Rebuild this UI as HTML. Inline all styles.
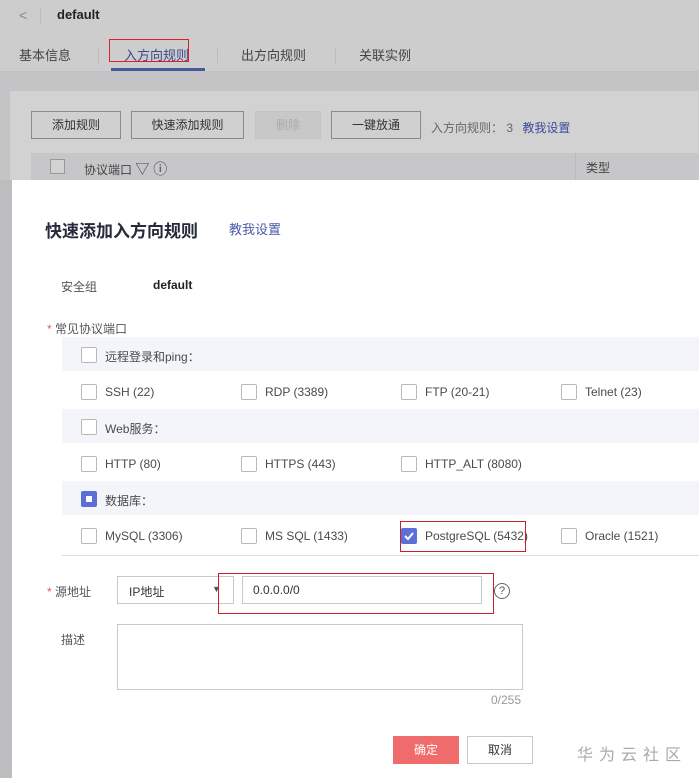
<!DOCTYPE html>
<html><head><meta charset="utf-8"><style>
*{margin:0;padding:0;box-sizing:border-box}
body{width:699px;height:778px;position:relative;overflow:hidden;background:#bfbfc2;font-family:"Liberation Sans","Noto Sans CJK SC",sans-serif;font-size:12px;color:#333}
.a{position:absolute}
.cb{position:absolute;width:14px;height:14px;border:1px solid #b8b8b8;background:#fff;border-radius:2px}
.lbl{position:absolute;font-size:12px;color:#4a4a4a}
.btn{position:absolute;border:1px solid #8a8a8a;background:#d0d0d0;font-size:12px;color:#333;text-align:center;line-height:26px;height:28px}
.row{position:absolute;left:62px;width:637px;height:34px;background:#f3f5fa}
</style></head><body>
<div class="a" style="left:0;top:0;width:699px;height:72px;background:#cdcdcd"></div>
<div class="a" style="left:19px;top:7px;color:#888;font-size:14px">&lt;</div>
<div class="a" style="left:40px;top:7px;width:1px;height:16px;background:#bbb"></div>
<div class="a" style="left:57px;top:7px;font-weight:bold;font-size:13px;color:#222">default</div>
<div class="a" style="left:19px;top:45px;font-size:13px;color:#444">基本信息</div>
<div class="a" style="left:98px;top:47px;width:1px;height:16px;background:#bbb"></div>
<div class="a" style="left:124px;top:45px;font-size:13px;color:#3d4a8c">入方向规则</div>
<div class="a" style="left:109px;top:39px;width:80px;height:23px;border:1px solid #e02020"></div>
<div class="a" style="left:111px;top:68px;width:94px;height:3px;background:#4a5899"></div>
<div class="a" style="left:217px;top:47px;width:1px;height:16px;background:#bbb"></div>
<div class="a" style="left:241px;top:45px;font-size:13px;color:#444">出方向规则</div>
<div class="a" style="left:335px;top:47px;width:1px;height:16px;background:#bbb"></div>
<div class="a" style="left:359px;top:45px;font-size:13px;color:#444">关联实例</div>
<div class="a" style="left:0;top:71px;width:699px;height:1px;background:#c2c2c2"></div>
<div class="a" style="left:0;top:72px;width:699px;height:108px;background:#c4c4c7"></div>
<div class="a" style="left:10px;top:91px;width:689px;height:260px;background:#d2d2d2"></div>
<div class="btn" style="left:31px;top:111px;width:90px">添加规则</div>
<div class="btn" style="left:131px;top:111px;width:113px">快速添加规则</div>
<div class="btn" style="left:255px;top:111px;width:66px;border-color:#c4c4c4;background:#c8c8c8;color:#aaa">删除</div>
<div class="btn" style="left:331px;top:111px;width:90px">一键放通</div>
<div class="a" style="left:431px;top:119px;color:#666">入方向规则： 3 <span style="color:#3d4a9c;margin-left:6px">教我设置</span></div>
<div class="a" style="left:31px;top:153px;width:668px;height:27px;background:#c7c7c9"></div>
<div class="a" style="left:50px;top:159px;width:15px;height:15px;border:1px solid #999;background:#d2d2d2"></div>
<div class="a" style="left:84px;top:159px;color:#444">协议端口 <span style="font-size:14px">▽ ⓘ</span></div>
<div class="a" style="left:575px;top:153px;width:1px;height:27px;background:#bbb"></div>
<div class="a" style="left:586px;top:159px;color:#444">类型</div>

<div class="a" style="left:12px;top:180px;width:687px;height:598px;background:#fff"></div>
<div class="a" style="left:45px;top:217px;font-size:17px;font-weight:bold;color:#252b3a">快速添加入方向规则</div>
<div class="a" style="left:229px;top:219px;font-size:13px;color:#4a5aa8">教我设置</div>
<div class="a" style="left:61px;top:278px;color:#555">安全组</div>
<div class="a" style="left:153px;top:278px;font-weight:bold;color:#222">default</div>
<div class="a" style="left:47px;top:320px;color:#555"><span style="color:#e65a5a">*</span> 常见协议端口</div>
<div class="row" style="top:337px"></div>
<div class="row" style="top:409px"></div>
<div class="row" style="top:481px"></div>
<div class="cb" style="left:81px;top:347px;width:16px;height:16px"></div><div class="lbl" style="left:105px;top:348px">远程登录和ping：</div>
<div class="cb" style="left:81px;top:384px;width:16px;height:16px"></div><div class="lbl" style="left:105px;top:385px">SSH (22)</div>
<div class="cb" style="left:241px;top:384px;width:16px;height:16px"></div><div class="lbl" style="left:265px;top:385px">RDP (3389)</div>
<div class="cb" style="left:401px;top:384px;width:16px;height:16px"></div><div class="lbl" style="left:425px;top:385px">FTP (20-21)</div>
<div class="cb" style="left:561px;top:384px;width:16px;height:16px"></div><div class="lbl" style="left:585px;top:385px">Telnet (23)</div>
<div class="cb" style="left:81px;top:419px;width:16px;height:16px"></div><div class="lbl" style="left:105px;top:420px">Web服务：</div>
<div class="cb" style="left:81px;top:456px;width:16px;height:16px"></div><div class="lbl" style="left:105px;top:457px">HTTP (80)</div>
<div class="cb" style="left:241px;top:456px;width:16px;height:16px"></div><div class="lbl" style="left:265px;top:457px">HTTPS (443)</div>
<div class="cb" style="left:401px;top:456px;width:16px;height:16px"></div><div class="lbl" style="left:425px;top:457px">HTTP_ALT (8080)</div>
<div class="cb" style="left:81px;top:491px;width:16px;height:16px;background:#5b6fd6;border-color:#5b6fd6"><div class="a" style="left:4px;top:4px;width:6px;height:6px;background:#fff"></div></div><div class="lbl" style="left:105px;top:492px">数据库：</div>
<div class="cb" style="left:81px;top:528px;width:16px;height:16px"></div><div class="lbl" style="left:105px;top:529px">MySQL (3306)</div>
<div class="cb" style="left:241px;top:528px;width:16px;height:16px"></div><div class="lbl" style="left:265px;top:529px">MS SQL (1433)</div>
<div class="cb" style="left:401px;top:528px;width:16px;height:16px;background:#5b6fd6;border-color:#5b6fd6"><svg width="14" height="14" class="a" style="left:0;top:0"><path d="M3 7 L6 10 L11 4" stroke="#fff" stroke-width="2" fill="none"/></svg></div><div class="lbl" style="left:425px;top:529px">PostgreSQL (5432)</div>
<div class="a" style="left:400px;top:521px;width:126px;height:31px;border:1px solid #c8202a"></div>
<div class="cb" style="left:561px;top:528px;width:16px;height:16px"></div><div class="lbl" style="left:585px;top:529px">Oracle (1521)</div>
<div class="a" style="left:62px;top:555px;width:637px;height:1px;background:#ddd"></div>

<div class="a" style="left:47px;top:583px;color:#555"><span style="color:#e65a5a">*</span> 源地址</div>
<div class="a" style="left:117px;top:576px;width:117px;height:28px;border:1px solid #c8c8c8"></div>
<div class="a" style="left:129px;top:583px;color:#333">IP地址</div>
<div class="a" style="left:212px;top:584px;font-size:9px;color:#555">▼</div>
<div class="a" style="left:242px;top:576px;width:240px;height:28px;border:1px solid #c8c8c8"></div>
<div class="a" style="left:253px;top:583px;color:#333">0.0.0.0/0</div>
<div class="a" style="left:218px;top:573px;width:276px;height:41px;border:1px solid #c8202a"></div>
<div class="a" style="left:494px;top:583px;width:16px;height:16px;border:1px solid #666;border-radius:50%;font-size:11px;text-align:center;line-height:14px;color:#555">?</div>
<div class="a" style="left:61px;top:631px;color:#555">描述</div>
<div class="a" style="left:117px;top:624px;width:406px;height:66px;border:1px solid #c8c8c8"></div>
<div class="a" style="left:491px;top:693px;color:#999">0/255</div>
<div class="a" style="left:393px;top:736px;width:66px;height:28px;background:#f06b6b;color:#fff;text-align:center;line-height:28px">确定</div>
<div class="a" style="left:467px;top:736px;width:66px;height:28px;border:1px solid #c8c8c8;color:#333;text-align:center;line-height:26px">取消</div>
<div class="a" style="left:577px;top:741px;font-size:16px;color:#aaa;letter-spacing:6px">华为云社区</div>
<div class="a" style="left:0;top:180px;width:12px;height:598px;background:#bdbdc0"></div>
</body></html>
